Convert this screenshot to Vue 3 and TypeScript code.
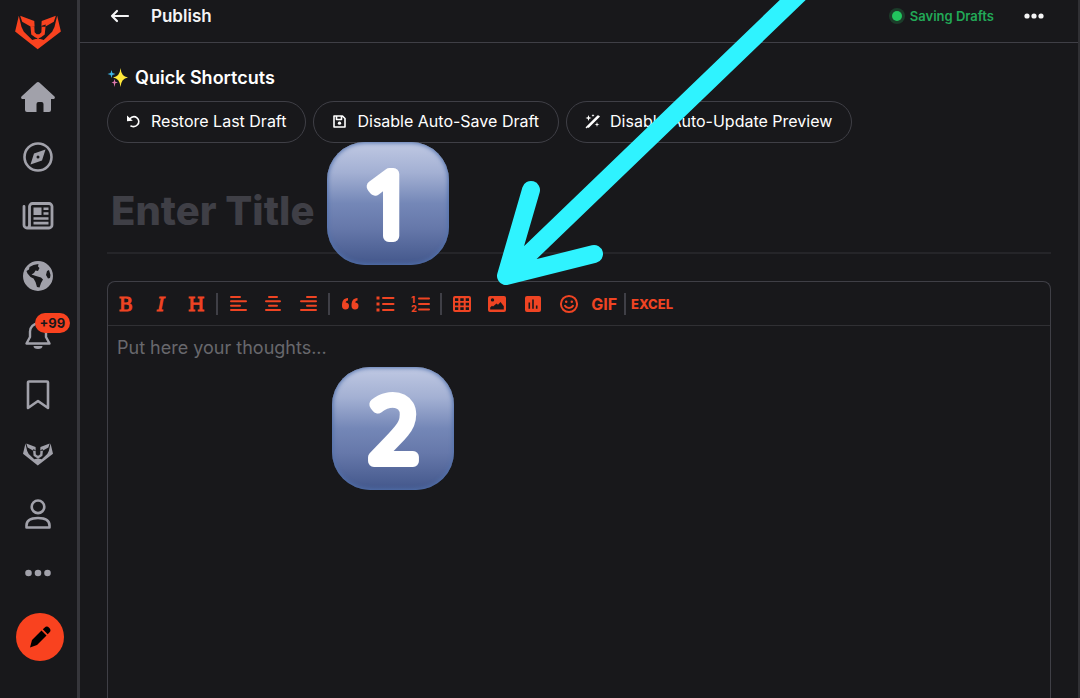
<script setup lang="ts">
import { ref } from 'vue'

interface Shape {
  d: string
  fill?: boolean
}
interface NavItem {
  label: string
  box: string
  width: number
  height: number
  stroke: number
  shapes: Shape[]
  badge?: string
}
interface Tool {
  label: string
  text?: string
  kind?: string
  shapes?: Shape[]
}

const catPath =
  'M58 50 47 97 114 150 183 97 172 50 164 84 157 98 132 122 122 119H108L98 122 73 98 66 84Z' +
  'M62 50 104 66 105 82 94 83 68 68Z M168 50 126 66 125 82 136 83 162 68Z' +
  'M92 76 104 80 105 99 111 105H119L125 99 126 80 138 76 135 106 124 114 119 116 115 120 111 116 106 114 95 106Z'

const navItems: NavItem[] = [
  {
    label: 'Home', box: '0 0 34 30', width: 34, height: 30, stroke: 0,
    shapes: [{ d: 'M15.4.8a2.4 2.4 0 0 1 3.2 0L33 14c1.600 1.500.8 3-.8 3H30v11a2 2 0 0 1-2 2h-5.500V22a2 2 0 0 0-2-2h-3a2 2 0 0 0-2 2v8H6a2 2 0 0 1-2-2V17H1.800C.2 17-.6 15.500 1 14Z', fill: true }],
  },
  {
    label: 'Explore', box: '0 0 30 30', width: 30, height: 30, stroke: 2.6,
    shapes: [
      { d: 'M15 1.500a13.500 13.500 0 1 1 0 27a13.500 13.500 0 1 1 0-27Z' },
      { d: 'M22.500 7.500 19 18.500 7.500 22.500 11 11.500ZM15 13.500a1.500 1.500 0 1 0 0 3a1.500 1.500 0 0 0 0-3Z', fill: true },
    ],
  },
  {
    label: 'News', box: '0 0 32 28', width: 32, height: 28, stroke: 2.8,
    shapes: [
      { d: 'M10.500 1.500h16.500a3 3 0 0 1 3 3v18.500a3 3 0 0 1-3 3H5a3 3 0 0 1-3-3V4.500M7.500 24V4.500a3 3 0 0 1 3-3M5 26c2 0 2.500-1 2.500-3' },
      { d: 'M11.500 5.500h8v7.500h-8ZM21.500 5.500h5v2.600h-5ZM21.500 10.200h5v2.600h-5ZM11.500 15.200h15v2.600h-15ZM11.500 19.800h15v2.600h-15Z', fill: true },
    ],
  },
  {
    label: 'World', box: '0 0 30 30', width: 30, height: 30, stroke: 0,
    shapes: [{
      d: 'M15 0a15 15 0 1 0 0 30a15 15 0 0 0 0-30ZM10.500 4 15.500 3 15 5.500 16.500 7 15 10 12.500 9.500 11 12 8.500 13.500 13 15 18 16.500 20 18.500 18 22 16.500 26.500 14 26 12.500 21 10.500 17.500 7.500 16 4.500 12.500 3.500 10 6 8.500 6.500 6ZM24 10l2-1 1.500 5-.5 3-2 .5-2-3.500Z',
      fill: true,
    }],
  },
  {
    label: 'Notifications', box: '0 0 26 28', width: 26, height: 28, stroke: 2.4,
    shapes: [
      { d: 'M1.500 22.500h23L21 16V10.500a8 8 0 0 0-16 0V16Z' },
      { d: 'M8.500 25h9a4.500 3 0 0 1-9 0Z', fill: true },
    ],
    badge: '+99',
  },
  {
    label: 'Bookmarks', box: '0 0 24 30', width: 24, height: 30, stroke: 2.6,
    shapes: [{ d: 'M3 1.500h18a1 1 0 0 1 1 1v25.500L12 21 2 28V2.500a1 1 0 0 1 1-1Z' }],
  },
  {
    label: 'Community', box: '47 48 136 104', width: 30, height: 23, stroke: 0,
    shapes: [{ d: catPath, fill: true }],
  },
  {
    label: 'Profile', box: '0 0 26 30', width: 26, height: 30, stroke: 2.6,
    shapes: [
      { d: 'M13 1.500a6.300 6.300 0 1 1 0 12.600a6.300 6.300 0 1 1 0-12.600Z' },
      { d: 'M1.500 28.500v-2c0-4.500 4-7.500 11.500-7.500s11.500 3 11.500 7.500v2Z' },
    ],
  },
  {
    label: 'More', box: '0 0 26 8', width: 26, height: 8, stroke: 0,
    shapes: [{ d: 'M3.500.7a3.300 3.300 0 1 1 0 6.600a3.300 3.300 0 0 1 0-6.600ZM13 .7a3.300 3.300 0 1 1 0 6.600a3.300 3.300 0 0 1 0-6.600ZM22.500.7a3.300 3.300 0 1 1 0 6.600a3.300 3.300 0 0 1 0-6.600Z', fill: true }],
  },
]

const shortcuts = [
  {
    label: 'Restore Last Draft',
    shapes: [
      { d: 'M3.500 5C6 2.300 9 2.200 11 3.800a4.800 4.800 0 0 1 .5 7c-1.500 1.600-4 2.200-6.500 1.200' },
      { d: 'M1 1.500 6.800 6.800 1 7.200Z', fill: true },
    ],
  },
  {
    label: 'Disable Auto-Save Draft',
    shapes: [
      { d: 'M2 2h8.500L13 4.500V13H2ZM4.500 2.500v3h5v-3' },
      { d: 'M7.500 7.500a1.600 1.600 0 1 1 0 3.300a1.600 1.600 0 0 1 0-3.300Z', fill: true },
    ],
  },
  {
    label: 'Disable Auto-Update Preview',
    shapes: [
      { d: 'M1.500 13.500 13 2M3.500 13 14 2.500' },
      { d: 'M3.500 1 4.300 3.200 6.500 4 4.300 4.800 3.500 7 2.700 4.800.5 4 2.700 3.200ZM12 8l.6 1.900 1.900.6-1.900.6L12 13l-.6-1.900-1.900-.6 1.900-.6ZM8 0l.4 1.100 1.100.4-1.100.4L8 3 7.600 1.900 6.500 1.500l1.100-.4Z', fill: true },
    ],
  },
]

const groups: Tool[][] = [
  [
    { label: 'Bold', text: 'B', kind: 'slab' },
    { label: 'Italic', text: 'I', kind: 'slab slanted' },
    { label: 'Heading', text: 'H', kind: 'slab' },
  ],
  [
    { label: 'Align left', shapes: [{ d: 'M2 2h9M2 6.300h15M2 10.700h9M2 15h15' }] },
    { label: 'Align center', shapes: [{ d: 'M5 2h8M2 6.300h14M5 10.700h8M2 15h14' }] },
    { label: 'Align right', shapes: [{ d: 'M8 2h9M2 6.300h15M8 10.700h9M2 15h15' }] },
  ],
  [
    {
      label: 'Quote',
      shapes: [{ d: 'M7 3v2.500C5.500 5.700 4.800 6.500 4.700 7.500H5a3.500 3.500 0 1 1-4 3.600C1 6 2.500 3.200 7 3ZM16.500 3v2.500c-1.500.2-2.200 1-2.300 2h.3a3.500 3.500 0 1 1-4 3.600C10.500 6 12 3.200 16.500 3Z', fill: true }],
    },
    {
      label: 'Bulleted list',
      shapes: [{ d: 'M7 3h10.500M7 9h10.500M7 15h10.500' }, { d: 'M.5 1.500h3v3h-3ZM.5 7.500h3v3h-3ZM.5 13.500h3v3h-3Z', fill: true }],
    },
    {
      label: 'Numbered list', kind: 'numbered',
      shapes: [{ d: 'M8 3.500h10M8 9h10M8 14.500h10' }],
    },
  ],
  [
    {
      label: 'Table',
      shapes: [{ d: 'M2 1h14a2 2 0 0 1 2 2v12a2 2 0 0 1-2 2H2a2 2 0 0 1-2-2V3a2 2 0 0 1 2-2ZM2 3.200v2.800h3.300V3.200ZM7.300 3.200v2.800h3.400V3.200ZM12.700 3.200v2.800H16V3.200ZM2 7.700v2.700h3.300V7.700ZM7.300 7.700v2.700h3.400V7.700ZM12.700 7.700v2.700H16V7.700ZM2 12.200V15h3.300v-2.800ZM7.300 12.200V15h3.400v-2.800ZM12.700 12.200V15H16v-2.800Z', fill: true }],
    },
    {
      label: 'Image',
      shapes: [{ d: 'M2 1h14a2 2 0 0 1 2 2v12a2 2 0 0 1-2 2H2a2 2 0 0 1-2-2V3a2 2 0 0 1 2-2ZM4.500 3.200a1.700 1.700 0 1 0 0 3.400a1.700 1.700 0 0 0 0-3.400ZM2.200 14.500h13.600v-3.300L12.500 7 10 9.800 8.500 8.500 5 11.500 4 10.700 2.200 12.500Z', fill: true }],
    },
    {
      label: 'Poll',
      shapes: [{ d: 'M3 1h12a2 2 0 0 1 2 2v12a2 2 0 0 1-2 2H3a2 2 0 0 1-2-2V3a2 2 0 0 1 2-2ZM4.500 7.500v6.300h1.600V7.500ZM8.200 4.500v9.300h1.600V4.500ZM11.900 10.500v3.300h1.600v-3.300Z', fill: true }],
    },
    {
      label: 'Emoji',
      shapes: [
        { d: 'M9 .9a8.100 8.100 0 1 1 0 16.200a8.100 8.100 0 1 1 0-16.200ZM5 10.800c1.600 3 6.400 3 8 0' },
        { d: 'M6.200 5.500a1.200 1.200 0 1 1 0 2.500a1.200 1.200 0 0 1 0-2.500ZM11.800 5.500a1.200 1.200 0 1 1 0 2.500a1.200 1.200 0 0 1 0-2.500Z', fill: true },
      ],
    },
    { label: 'Insert GIF', text: 'GIF', kind: 'gif' },
  ],
]

const keycaps = [
  { digit: '1', place: 'first' },
  { digit: '2', place: 'second' },
]

const title = ref('')
const body = ref('')
</script>

<template>
  <div class="page">
    <aside class="sidebar">
      <a class="logo" href="#" aria-label="Start page">
        <svg viewBox="47 48 136 104" width="46" height="35"><path :d="catPath" /></svg>
      </a>
      <nav class="nav">
        <a v-for="item in navItems" :key="item.label" class="nav-item" href="#" :aria-label="item.label">
          <svg :viewBox="item.box" :width="item.width" :height="item.height">
            <path
              v-for="(s, i) in item.shapes"
              :key="i"
              :d="s.d"
              :class="s.fill ? 'solid' : 'line'"
              :stroke-width="s.fill ? 0 : item.stroke"
            />
          </svg>
          <span v-if="item.badge" class="badge">{{ item.badge }}</span>
        </a>
      </nav>
      <button class="compose" type="button" aria-label="Write a post">
        <svg viewBox="0 0 22 22" width="22" height="22">
          <path d="M12.500 4.500 17.500 9.500 8 19 1 21.500 3 14Z M13.800 3.300 15.500 1.700a3.300 3.300 0 0 1 4.600 0l.3.300a3.300 3.300 0 0 1 0 4.600L18.700 8.200Z" />
        </svg>
      </button>
    </aside>

    <main class="main">
      <header class="topbar">
        <button class="plain back" type="button" aria-label="Back">
          <svg viewBox="0 0 20 16" width="20" height="16"><path class="line" stroke-width="2.200" d="M18 8H2M7 3 2 8l5 5" /></svg>
        </button>
        <h1 class="heading">Publish</h1>
        <div class="status"><span class="dot"></span>Saving Drafts</div>
        <button class="plain" type="button" aria-label="More options">
          <svg viewBox="0 0 20 6" width="20" height="6">
            <circle class="solid" cx="3" cy="3" r="2.600" /><circle class="solid" cx="10" cy="3" r="2.600" /><circle class="solid" cx="17" cy="3" r="2.600" />
          </svg>
        </button>
      </header>

      <section class="content">
        <h2 class="quick">
          <svg viewBox="0 0 22 22" width="22" height="22" aria-hidden="true">
            <path fill="#ffe83b" d="M13.500 1 Q14.200 9.600 21 10.500 Q14.200 11.400 13.500 20 Q12.800 11.400 6 10.500 Q12.800 9.600 13.500 1Z" />
            <path fill="#3fb5e6" d="M4.500 3 5.400 6.100 8.500 7 5.400 7.900 4.500 11 3.600 7.900.5 7 3.600 6.100Z" />
            <path fill="#dd79ae" d="M7.500 12 8.300 14.700 11 15.500 8.300 16.300 7.500 20 6.700 16.300 4.500 15.500 6.700 14.700Z" />
          </svg>
          Quick Shortcuts
        </h2>
        <div class="shortcuts">
          <button v-for="s in shortcuts" :key="s.label" class="pill" type="button">
            <svg viewBox="0 0 15 15" width="15" height="15">
              <path v-for="(p, i) in s.shapes" :key="i" :d="p.d" :class="p.fill ? 'solid' : 'line'" :stroke-width="p.fill ? 0 : 1.6" />
            </svg>
            {{ s.label }}
          </button>
        </div>

        <input v-model="title" class="title" type="text" aria-label="Title" placeholder="Enter Title" />

        <div class="editor">
          <div class="toolbar" role="toolbar" aria-label="Formatting">
            <template v-for="(group, g) in groups" :key="g">
              <div class="group" :class="{ wide: group.length > 3 }">
                <button v-for="t in group" :key="t.label" class="tool" :class="t.kind" type="button" :aria-label="t.label">
                  <template v-if="t.text">{{ t.text }}</template>
                  <svg v-else viewBox="0 0 18 18" width="18" height="18">
                    <path v-for="(p, i) in t.shapes" :key="i" :d="p.d" :class="p.fill ? 'solid' : 'line'" :stroke-width="p.fill ? 0 : 2" />
                    <template v-if="t.kind === 'numbered'">
                      <text class="digit" x="0" y="8">1</text>
                      <text class="digit" x="0" y="17">2</text>
                    </template>
                  </svg>
                </button>
              </div>
              <span class="divider"></span>
            </template>
            <button class="tool excel" type="button">EXCEL</button>
          </div>
          <textarea v-model="body" class="body" aria-label="Post body" placeholder="Put here your thoughts..."></textarea>
        </div>
      </section>
    </main>

    <div v-for="k in keycaps" :key="k.digit" class="keycap" :class="k.place">
      <svg viewBox="0 0 122 123" width="122" height="123">
        <text class="numeral" x="62" y="94" text-anchor="middle">{{ k.digit }}</text>
      </svg>
    </div>
    <svg class="arrow" viewBox="0 0 330 300" width="330" height="300" aria-hidden="true">
      <path d="M310-7 16 276M41 190 16 276 104 254" />
    </svg>
  </div>
</template>

<style>
body {
  margin: 0;
  background: #18181b;
}
</style>

<style scoped>
.page {
  position: relative;
  display: flex;
  min-height: 100vh;
  overflow: hidden;
  background: #18181b;
  color: #f4f4f5;
  font-family: Inter, "Liberation Sans", sans-serif;
}
.page *,
.page {
  box-sizing: border-box;
}
svg {
  display: block;
  flex: none;
  overflow: visible;
}
.solid {
  fill: currentColor;
  fill-rule: evenodd;
}
.line {
  fill: none;
  stroke: currentColor;
  stroke-linecap: round;
  stroke-linejoin: round;
}
button {
  margin: 0;
  padding: 0;
  border: 0;
  background: none;
  color: inherit;
  font-family: inherit;
  cursor: pointer;
}
.sidebar {
  display: flex;
  flex: none;
  flex-direction: column;
  align-items: center;
  width: 80px;
  padding: 15px 2px 0 0;
  border-right: 3px solid #36363b;
}
.logo {
  color: #f9421f;
  fill: currentColor;
}
.nav {
  display: flex;
  flex-direction: column;
  justify-content: space-between;
  height: 520px;
  margin-top: 25px;
}
.nav-item {
  position: relative;
  display: flex;
  align-items: center;
  justify-content: center;
  width: 44px;
  height: 44px;
  color: #a1a1aa;
}
.badge {
  position: absolute;
  top: 0;
  left: 19px;
  padding: 0 5px;
  border-radius: 10px;
  background: #f9421f;
  color: #18181b;
  font-size: 13px;
  font-weight: 700;
  line-height: 20px;
}
.compose {
  display: flex;
  align-items: center;
  justify-content: center;
  width: 48px;
  height: 48px;
  margin: 18px 0 0 4px;
  border-radius: 50%;
  background: #f9421f;
  color: #000;
}
.main {
  display: flex;
  flex: 1;
  flex-direction: column;
  min-width: 0;
  border-right: 2px solid #303034;
}
.topbar {
  display: flex;
  align-items: center;
  height: 43px;
  padding: 0 34px 10px 30px;
  border-bottom: 1px solid #3f3f46;
}
.plain {
  display: flex;
}
.heading {
  flex: 1;
  margin: 0 0 0 21px;
  font-size: 17px;
  font-weight: 600;
  line-height: 24px;
}
.status {
  display: flex;
  align-items: center;
  gap: 8px;
  margin-right: 30px;
  color: #22a957;
  font-size: 13px;
  font-weight: 600;
}
.dot {
  width: 10px;
  height: 10px;
  border-radius: 50%;
  background: #22c55e;
  box-shadow: 0 0 0 3px #1c3c2a;
}
.content {
  display: flex;
  flex: 1;
  flex-direction: column;
  padding: 23px 27px 0;
}
.quick {
  display: flex;
  align-items: center;
  gap: 6px;
  margin: 0;
  font-size: 18px;
  font-weight: 600;
  line-height: 24px;
  color: #fff;
}
.shortcuts {
  display: flex;
  gap: 7px;
  margin-top: 11px;
}
.pill {
  display: flex;
  align-items: center;
  gap: 10px;
  height: 42px;
  padding: 0 19px 2px 18px;
  border: 1px solid #3f3f46;
  border-radius: 21px;
  color: #fff;
  font-size: 16px;
  font-weight: 400;
  white-space: nowrap;
}
.title {
  width: 100%;
  height: 86px;
  margin-top: 25px;
  padding: 0 4px;
  border: 0;
  border-bottom: 2px solid #252529;
  outline: 0;
  background: none;
  color: #f4f4f5;
  font-family: inherit;
  font-size: 40px;
  font-weight: 800;
}
.title::placeholder {
  color: #3f3f46;
  opacity: 1;
}
.editor {
  display: flex;
  flex: 1;
  flex-direction: column;
  margin-top: 27px;
  border: 1px solid #3f3f46;
  border-bottom: 0;
  border-radius: 8px 8px 0 0;
}
.toolbar {
  display: flex;
  align-items: center;
  height: 44px;
  border-bottom: 1px solid #303034;
  color: #ef4423;
}
.group {
  display: grid;
  grid-template-columns: repeat(3, 1fr);
  width: 106px;
}
.group.wide {
  grid-template-columns: repeat(5, 1fr);
  width: 178px;
}
.tool {
  display: flex;
  align-items: center;
  justify-content: center;
  height: 32px;
}
.slab {
  font-family: "DejaVu Serif", serif;
  font-size: 19px;
  font-weight: 400;
  -webkit-text-stroke: 1px currentColor;
}
.slanted {
  font-style: italic;
}
.gif {
  font-size: 16px;
  font-weight: 700;
}
.excel {
  padding-left: 3px;
  font-size: 13px;
  font-weight: 800;
}
.digit {
  fill: currentColor;
  font-size: 9px;
  font-weight: 800;
}
.divider {
  width: 2px;
  height: 22px;
  margin: 0 2px;
  background: #3f3f46;
}
.body {
  flex: 1;
  width: 100%;
  padding: 10px 9px;
  border: 0;
  outline: 0;
  resize: none;
  background: none;
  color: #f4f4f5;
  font-family: inherit;
  font-size: 18px;
  line-height: 24px;
}
.body::placeholder {
  color: #68686d;
  opacity: 1;
}
.keycap {
  position: absolute;
  width: 122px;
  height: 123px;
  border-radius: 38px;
  background: linear-gradient(#c0c9e3, #a3b0d3 25%, #7487b7 50%, #6678aa 70%, #43578b);
  box-shadow: inset 0 0 4px 1px #5272ad;
  pointer-events: none;
}
.numeral {
  fill: #fff;
  stroke: #fff;
  stroke-width: 12px;
  stroke-linejoin: round;
  font-family: "Open Sans", "Noto Sans", sans-serif;
  font-size: 87px;
  font-weight: 300;
}
.first {
  top: 142px;
  left: 327px;
}
.second {
  top: 367px;
  left: 332px;
}
.arrow {
  position: absolute;
  top: 0;
  left: 490px;
  fill: none;
  stroke: #2ff3ff;
  stroke-width: 18;
  stroke-linecap: round;
  stroke-linejoin: round;
  pointer-events: none;
}
</style>
